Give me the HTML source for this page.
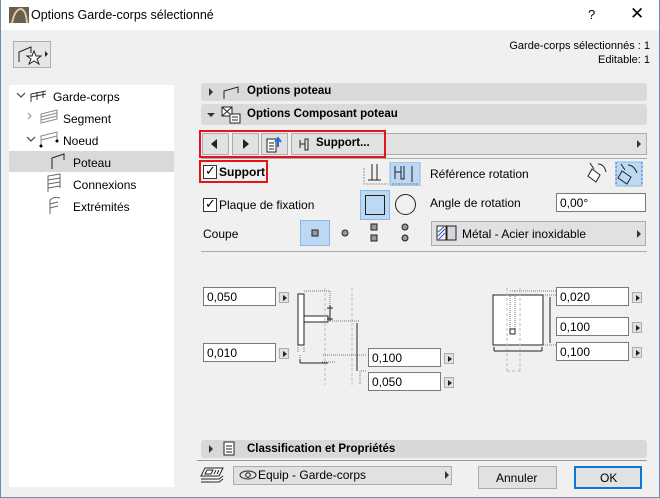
<!DOCTYPE html>
<html><head><meta charset="utf-8"><style>
*{box-sizing:border-box;margin:0;padding:0}
body{width:660px;height:498px;overflow:hidden;background:#f0f0f0;font-family:"Liberation Sans",sans-serif;font-size:12px;color:#000;position:relative}
.a{position:absolute}
.bar{position:absolute;left:201px;width:446px;background:#dadada;border-radius:3px}
.bt{position:absolute;font-weight:bold;font-size:11.5px}
.btn{position:absolute;background:#e1e1e1;border:1px solid #adadad}
.in{position:absolute;background:#fff;border:1px solid #7a7a7a;font-size:12px;padding:2px 0 0 3px;height:19px;width:73px}
.sb{position:absolute;width:10px;height:11px;background:#e1e1e1;border:1px solid #adadad}
.sb:after{content:"";position:absolute;left:3px;top:2px;border-left:4px solid #222;border-top:3px solid transparent;border-bottom:3px solid transparent}
.tri{position:absolute;border-left:4px solid #333;border-top:4px solid transparent;border-bottom:4px solid transparent}
.cb{position:absolute;width:14px;height:14px;border:1px solid #333;background:#fff}
.t{position:absolute;white-space:nowrap}
</style></head><body>
<div class="a" style="left:0;top:0;width:660px;height:30px;background:#fff"></div>
<div class="a" style="left:0;top:0;width:1px;height:498px;background:#6b8db3"></div>
<div class="a" style="left:659px;top:0;width:1px;height:498px;background:#6b8db3"></div>
<div class="a" style="left:0;top:497px;width:660px;height:1px;background:#6b8db3"></div>
<svg class="a" style="left:9px;top:7px" width="20" height="16"><rect width="20" height="16" fill="#6a5e4c"/><path d="M3 16 Q6 2 12 2 Q17 3 18 16" stroke="#d8c8a8" stroke-width="2" fill="none"/></svg>
<div class="t" style="left:31px;top:8px;font-size:12.5px">Options Garde-corps sélectionné</div>
<div class="t" style="left:588px;top:7px;font-size:13px">?</div>
<div class="t" style="left:630px;top:4px;font-size:17px;font-weight:200">✕</div>
<div class="btn" style="left:13px;top:41px;width:38px;height:27px;background:#e6e6e6">
<svg width="36" height="25"><path d="M5 20 V10 L17 5 V11" stroke="#222" fill="none"/><path d="M20 9 l2 5 5 0 -4 3 2 5 -5-3 -5 3 2-5 -4-3 5 0z" stroke="#222" fill="#fff"/><path d="M31 9 l3 3 -3 3z" fill="#222"/></svg></div>
<div class="t" style="right:10px;top:40px;font-size:11px">Garde-corps sélectionnés : 1</div>
<div class="t" style="right:10px;top:54px;font-size:11px">Editable: 1</div>
<div class="a" style="left:9px;top:85px;width:165px;height:402px;background:#fff"></div>
<div class="a" style="left:9px;top:151px;width:165px;height:21px;background:#d9d9d9"></div>
<div class="a" style="left:182px;top:76px;width:473px;height:411px;background:#f0f0f0"></div>
<svg class="a" style="left:14px;top:88px" width="60" height="130" font-size="0">
<path d="M3 5 l4 4 4-4" stroke="#444" fill="none" stroke-width="1.2"/>
<path d="M17 14 V6 L32 3 M23 12 V4 M29 10 V3 M17 9 L32 6" stroke="#333" fill="none"/>
<path d="M14 25 l3 3 -3 3" stroke="#999" fill="none" stroke-width="1.2"/>
<path d="M27 35 V26 L43 22 V31 Z M27 29 L43 25 M27 32 L43 28" stroke="#888" fill="none"/>
<path d="M13 49 l4 4 4-4" stroke="#444" fill="none" stroke-width="1.2"/>
<path d="M27 58 V48 L43 44 V52 M27 52 L43 48" stroke="#888" fill="none"/><circle cx="27" cy="58" r="1.5"/><circle cx="43" cy="53" r="1.5"/>
<path d="M38 81 V70 L50 66 V72" stroke="#222" fill="none"/>
<path d="M34 104 V88 L46 86 V100 M34 92 L46 90 M34 96 L46 94 M34 100 L46 98" stroke="#666" fill="none"/>
<path d="M36 126 V112 Q40 108 46 110 M36 116 L44 114 M36 120 L44 118" stroke="#666" fill="none"/>
</svg>
<div class="t" style="left:53px;top:90px">Garde-corps</div>
<div class="t" style="left:63px;top:112px">Segment</div>
<div class="t" style="left:63px;top:134px">Noeud</div>
<div class="t" style="left:73px;top:156px">Poteau</div>
<div class="t" style="left:73px;top:178px">Connexions</div>
<div class="t" style="left:73px;top:200px">Extrémités</div>

<div class="bar" style="top:83px;height:18px"></div>
<div class="tri" style="left:209px;top:88px"></div>
<svg class="a" style="left:222px;top:83px" width="20" height="18"><path d="M2 16 V8 L16 4 V10" stroke="#222" fill="none"/></svg>
<div class="bt" style="left:247px;top:85px">Options poteau</div>
<div class="bar" style="top:104px;height:21px"></div>
<div class="a" style="left:207px;top:113px;border-top:4px solid #333;border-left:4px solid transparent;border-right:4px solid transparent"></div>
<svg class="a" style="left:221px;top:105px" width="22" height="20"><rect x="1" y="2" width="10" height="9" fill="#fff" stroke="#222"/><path d="M1 2 L11 11 M11 2 L1 11" stroke="#222"/><rect x="9" y="9" width="10" height="9" fill="#fff" stroke="#222"/><path d="M11 12h6M11 15h6" stroke="#222"/></svg>
<div class="bt" style="left:247px;top:108px">Options Composant poteau</div>

<div class="btn" style="left:202px;top:133px;width:27px;height:22px"></div>
<div class="a" style="left:211px;top:139px;border-right:6px solid #222;border-top:5px solid transparent;border-bottom:5px solid transparent"></div>
<div class="btn" style="left:232px;top:133px;width:27px;height:22px"></div>
<div class="a" style="left:243px;top:139px;border-left:6px solid #222;border-top:5px solid transparent;border-bottom:5px solid transparent"></div>
<div class="btn" style="left:261px;top:133px;width:27px;height:22px"><svg width="25" height="20"><path d="M5 5h9v13H5z" fill="#fff" stroke="#222"/><path d="M7 9h5M7 12h5M7 15h5" stroke="#222"/><path d="M16 13 V5 M13 8 l3-4 3 4" stroke="#1e73d0" stroke-width="2" fill="none"/></svg></div>
<div class="btn" style="left:291px;top:133px;width:356px;height:22px"></div>
<svg class="a" style="left:298px;top:137px" width="14" height="14"><path d="M2 3v8M2 7h5M7 2v11h3V2z" stroke="#222" fill="none"/></svg>
<div class="bt" style="left:316px;top:137px">Support...</div>
<div class="tri" style="left:637px;top:140px"></div>
<div class="a" style="left:199px;top:130px;width:187px;height:28px;border:2px solid #e4141a"></div>
<div class="a" style="left:201px;top:158px;width:446px;height:1px;background:#aaa"></div>

<div class="a" style="left:199px;top:160px;width:69px;height:23px;border:2px solid #e4141a"></div>
<div class="cb" style="left:203px;top:165px"></div><div class="t" style="left:205px;top:163px;font-size:13px">✓</div>
<div class="bt" style="left:219px;top:165px;font-size:12px">Support</div>
<svg class="a" style="left:362px;top:162px" width="60" height="24"><path d="M10 2v16M15 2v16M6 18h13" stroke="#222" fill="none"/><path d="M2 6v16h24" stroke="#999" stroke-dasharray="2 1" fill="none"/><rect x="28" y="0" width="30" height="24" fill="#bcd8f2" stroke="#8cb8e6"/><path d="M33 4v13M33 10h6M39 4v13h3V4M50 4v16" stroke="#222" fill="none"/><path d="M30 22h27" stroke="#777" stroke-dasharray="2 1"/></svg>
<div class="t" style="left:430px;top:167px">Référence rotation</div>
<svg class="a" style="left:586px;top:161px" width="60" height="26"><path d="M6 8l8 6-4 7-8-6z M4 2l4 6 M12 3 q6 0 8 8" stroke="#222" fill="#fff"/><rect x="30" y="1" width="26" height="24" fill="#bcd8f2" stroke="#8cb8e6"/><path d="M36 10l9 6-4 7-9-6z M35 3l4 6 M42 4q6 0 9 8" stroke="#222" fill="none"/><path d="M30 1v24M56 1v24" stroke="#1e73d0" stroke-dasharray="2 2"/></svg>

<div class="cb" style="left:203px;top:198px"></div><div class="t" style="left:205px;top:196px;font-size:13px">✓</div>
<div class="t" style="left:219px;top:198px">Plaque de fixation</div>
<div class="a" style="left:360px;top:190px;width:30px;height:30px;background:#bcd8f2;border:1px solid #8cb8e6"></div>
<div class="a" style="left:365px;top:195px;width:20px;height:20px;border:1px solid #222"></div>
<div class="a" style="left:395px;top:194px;width:21px;height:21px;border:1px solid #222;border-radius:50%"></div>
<div class="t" style="left:430px;top:196px">Angle de rotation</div>
<div class="in" style="left:556px;top:193px;width:90px">0,00°</div>

<div class="t" style="left:203px;top:227px">Coupe</div>
<div class="a" style="left:300px;top:220px;width:30px;height:26px;background:#bcd8f2;border:1px solid #8cb8e6"></div>
<svg class="a" style="left:300px;top:218px" width="115" height="30"><rect x="12" y="12" width="6" height="6" fill="#999" stroke="#222"/><circle cx="45" cy="15" r="3" fill="#999" stroke="#222"/><rect x="71" y="6" width="6" height="6" fill="#999" stroke="#222"/><rect x="71" y="17" width="6" height="6" fill="#999" stroke="#222"/><circle cx="105" cy="9" r="3" fill="#999" stroke="#222"/><circle cx="105" cy="20" r="3" fill="#999" stroke="#222"/></svg>
<div class="btn" style="left:431px;top:221px;width:215px;height:25px"></div>
<svg class="a" style="left:436px;top:224px" width="22" height="18"><rect x="1" y="2" width="9" height="14" fill="#fff" stroke="#222"/><path d="M2 8l6-5M2 12l7-7M3 15l6-6" stroke="#2a4fc8"/><rect x="11" y="2" width="9" height="14" fill="#d8d4dc" stroke="#222"/></svg>
<div class="t" style="left:462px;top:227px">Métal - Acier inoxidable</div>
<div class="tri" style="left:637px;top:230px"></div>
<div class="a" style="left:201px;top:251px;width:446px;height:1px;background:#aaa"></div>

<div class="in" style="left:203px;top:287px">0,050</div><div class="sb" style="left:279px;top:292px"></div>
<div class="in" style="left:203px;top:343px">0,010</div><div class="sb" style="left:279px;top:348px"></div>
<div class="in" style="left:368px;top:348px">0,100</div><div class="sb" style="left:444px;top:353px"></div>
<div class="in" style="left:368px;top:372px">0,050</div><div class="sb" style="left:444px;top:377px"></div>
<div class="in" style="left:556px;top:287px">0,020</div><div class="sb" style="left:632px;top:292px"></div>
<div class="in" style="left:556px;top:317px">0,100</div><div class="sb" style="left:632px;top:322px"></div>
<div class="in" style="left:556px;top:342px">0,100</div><div class="sb" style="left:632px;top:347px"></div>
<svg class="a" style="left:290px;top:285px" width="80" height="100" fill="none" stroke-width="1">
<rect x="8" y="9" width="6" height="51" fill="#fff" stroke="#222"/>
<rect x="14" y="31" width="24" height="6" fill="#fff" stroke="#222"/>
<path d="M35 3V101M62 3V101M35 101H62" stroke="#bbb" stroke-dasharray="3 2"/>
<path d="M14 6H40V30M38 36H70" stroke="#777" stroke-dasharray="1 1"/>
<path d="M40 20v16M37 23h6M37 34h6" stroke="#222"/>
<path d="M8 60v8M14 60v8M32 77H45M10 77V70" stroke="#777" stroke-dasharray="1 1"/>
<path d="M10 78H38M10 78V74" stroke="#222"/>
<path d="M76 70H32" stroke="#777" stroke-dasharray="1 1"/>
<path d="M76 86H70V100" stroke="#777" stroke-dasharray="1 1"/>
<path d="M67 38V86" stroke="#222"/>
</svg>
<svg class="a" style="left:480px;top:285px" width="80" height="100" fill="none">
<rect x="13" y="10" width="50" height="50" fill="#fff" stroke="#222"/>
<path d="M27 3V86M40 3V86M27 86H40" stroke="#bbb" stroke-dasharray="3 2"/>
<path d="M30 11V45M35 11V45" stroke="#777" stroke-dasharray="1 1"/>
<rect x="30" y="44" width="5" height="5" fill="#fff" stroke="#222"/>
<path d="M30 6H35M35 6H76M63 10H76M63 60H76" stroke="#777" stroke-dasharray="1 1"/>
<path d="M14 66H62M14 62V66M62 62V66" stroke="#222"/>
<path d="M70 12V58" stroke="#222"/>
</svg>

<div class="bar" style="top:440px;height:18px;background:#d8d8d8"></div>
<div class="tri" style="left:209px;top:445px"></div>
<svg class="a" style="left:223px;top:441px" width="12" height="16"><rect x="1" y="1" width="10" height="13" fill="#fff" stroke="#222"/><path d="M3 5h6M3 8h6M3 11h6" stroke="#222"/></svg>
<div class="bt" style="left:247px;top:443px">Classification et Propriétés</div>
<div class="a" style="left:197px;top:460px;width:450px;height:1px;background:#999"></div>
<svg class="a" style="left:198px;top:466px" width="28" height="20"><path d="M7 2h18l-4 8H3z M3 13h18l4-3 M3 16h18l4-3" stroke="#222" fill="#fff"/><path d="M9 4h6l-2 4H7z M18 4l-2 4M21 4l-2 4" stroke="#222" fill="none"/></svg>
<div class="btn" style="left:233px;top:466px;width:219px;height:19px"></div>
<svg class="a" style="left:239px;top:469px" width="18" height="12"><ellipse cx="9" cy="6" rx="8" ry="4" stroke="#222" fill="none"/><circle cx="9" cy="6" r="2.3" stroke="#222" fill="none"/></svg>
<div class="t" style="left:258px;top:468px">Equip - Garde-corps</div>
<div class="tri" style="left:445px;top:471px"></div>
<div class="btn" style="left:478px;top:466px;width:79px;height:23px"></div>
<div class="t" style="left:496px;top:471px">Annuler</div>
<div class="btn" style="left:574px;top:466px;width:68px;height:23px;border:2px solid #0a78d7"></div>
<div class="t" style="left:600px;top:471px">OK</div>
</body></html>
